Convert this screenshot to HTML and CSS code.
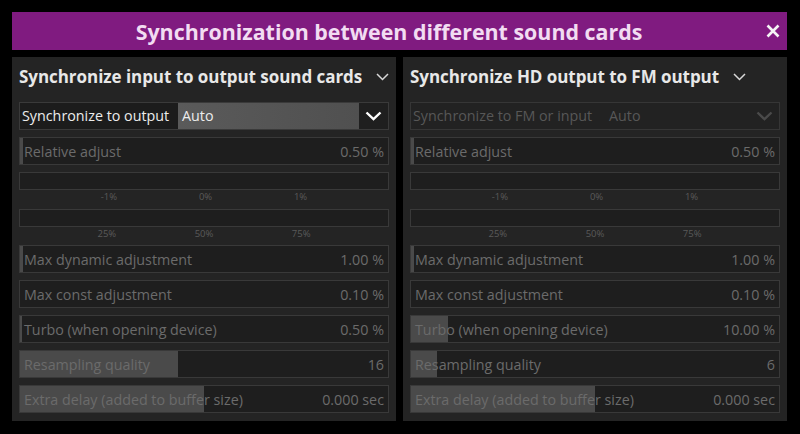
FILE: index.html
```html
<!DOCTYPE html>
<html>
<head>
<meta charset="utf-8">
<link rel="stylesheet" href="styles.css">
</head>
<body>
<div class="window">
  <div class="titlebar">
    <div class="title">Synchronization between different sound cards</div>
    <div class="close">
      <svg width="14" height="14" viewBox="0 0 14 14"><path d="M1.5 1.5 L12.5 12.5 M12.5 1.5 L1.5 12.5" stroke="#f4f4f4" stroke-width="2.6" fill="none"/></svg>
    </div>
  </div>
  <div class="panels">
    <section class="panel">
      <div class="phead">
        <span class="ptitle">Synchronize input to output sound cards</span>
        <svg class="pchev" width="13" height="8" viewBox="0 0 13 8"><path d="M1 1 L6.5 6.5 L12 1" stroke="#d8d8d8" stroke-width="1.5" fill="none"/></svg>
      </div>
      <div class="combo">
        <div class="clabel">Synchronize to output</div>
        <div class="cvalue">Auto</div>
        <div class="cbtn"><svg width="17" height="10" viewBox="0 0 17 10"><path d="M1.5 1.5 L8.5 8.2 L15.5 1.5" stroke="#ffffff" stroke-width="2.4" fill="none"/></svg></div>
      </div>
      <div class="row"><div class="fill" style="width:3px"></div><span class="lbl">Relative adjust</span><span class="val">0.50 %</span></div>
      <div class="scale"><div class="sbar"></div><div class="ticks"><span>-1%</span><span>0%</span><span>1%</span></div></div>
      <div class="scale"><div class="sbar"></div><div class="ticks"><span>25%</span><span>50%</span><span>75%</span></div></div>
      <div class="row"><div class="fill" style="width:3px"></div><span class="lbl">Max dynamic adjustment</span><span class="val">1.00 %</span></div>
      <div class="row"><span class="lbl">Max const adjustment</span><span class="val">0.10 %</span></div>
      <div class="row"><div class="fill" style="width:2px"></div><span class="lbl">Turbo (when opening device)</span><span class="val">0.50 %</span></div>
      <div class="row"><div class="fill" style="width:158px"></div><span class="lbl">Resampling quality</span><span class="val">16</span></div>
      <div class="row last"><div class="fill" style="width:184px"></div><span class="lbl">Extra delay (added to buffer size)</span><span class="val">0.000 sec</span></div>
    </section>
    <section class="panel">
      <div class="phead">
        <span class="ptitle">Synchronize HD output to FM output</span>
        <svg class="pchev" width="13" height="8" viewBox="0 0 13 8"><path d="M1 1 L6.5 6.5 L12 1" stroke="#d8d8d8" stroke-width="1.5" fill="none"/></svg>
      </div>
      <div class="combo disabled">
        <div class="clabel">Synchronize to FM or input</div>
        <div class="cvalue">Auto</div>
        <div class="cbtn"><svg width="17" height="10" viewBox="0 0 17 10"><path d="M1.5 1.5 L8.5 8.2 L15.5 1.5" stroke="#4a4a4a" stroke-width="2.4" fill="none"/></svg></div>
      </div>
      <div class="row"><div class="fill" style="width:3px"></div><span class="lbl">Relative adjust</span><span class="val">0.50 %</span></div>
      <div class="scale"><div class="sbar"></div><div class="ticks"><span>-1%</span><span>0%</span><span>1%</span></div></div>
      <div class="scale"><div class="sbar"></div><div class="ticks"><span>25%</span><span>50%</span><span>75%</span></div></div>
      <div class="row"><div class="fill" style="width:3px"></div><span class="lbl">Max dynamic adjustment</span><span class="val">1.00 %</span></div>
      <div class="row"><span class="lbl">Max const adjustment</span><span class="val">0.10 %</span></div>
      <div class="row"><div class="fill" style="width:37px"></div><span class="lbl">Turbo (when opening device)</span><span class="val">10.00 %</span></div>
      <div class="row"><div class="fill" style="width:26px"></div><span class="lbl">Resampling quality</span><span class="val">6</span></div>
      <div class="row last"><div class="fill" style="width:184px"></div><span class="lbl">Extra delay (added to buffer size)</span><span class="val">0.000 sec</span></div>
    </section>
  </div>
</div>
</body>
</html>
```
FILE: styles.css
```css
html, body {
  margin: 0;
  padding: 0;
  background: #000;
}
body {
  font-family: "Open Sans", "Noto Sans", sans-serif;
  width: 800px;
  height: 434px;
  overflow: hidden;
}
.window {
  padding: 12px 13px 0 12px;
}
.titlebar {
  height: 38px;
  background: #801b80;
  display: flex;
  align-items: center;
}
.title {
  flex: 1;
  text-align: center;
  color: #f2dcf2;
  font-weight: 700;
  font-size: 21.4px;
}
.close {
  width: 14px;
  padding-right: 7px;
  display: flex;
  align-items: center;
}
.close svg { display: block; }
.panels {
  margin-top: 7px;
  display: grid;
  grid-template-columns: 384px 384px;
  column-gap: 7px;
}
.panel {
  background: #242424;
  height: 364px;
  padding: 0 7px;
  box-sizing: border-box;
}
.phead {
  height: 38px;
  margin-bottom: 7px;
  display: flex;
  align-items: center;
  gap: 14px;
  padding-top: 1px;
  box-sizing: border-box;
}
.ptitle {
  color: #e8e8e8;
  font-weight: 700;
  font-size: 17px;
  letter-spacing: -0.05px;
  white-space: nowrap;
}
.pchev { display: block; flex: none; }
.combo {
  height: 28px;
  box-sizing: border-box;
  border: 1px solid #3a3a3a;
  background: #1c1c1c;
  display: flex;
  margin-bottom: 7px;
  font-size: 14.3px;
  color: #ececec;
}
.clabel {
  width: 156px;
  padding-left: 2px;
  line-height: 26px;
  white-space: nowrap;
}
.cvalue {
  flex: 1;
  background: linear-gradient(90deg, #5a5a5a, #505050);
  padding-left: 4px;
  line-height: 26px;
}
.cbtn {
  width: 29px;
  display: flex;
  align-items: center;
  justify-content: center;
  background: #1f1f1f;
}
.cbtn svg { display: block; }
.combo.disabled { color: #575757; background: #222; border-color: #363636; }
.combo.disabled .clabel { width: 192px; }
.combo.disabled .cvalue { background: transparent; }
.combo.disabled .cbtn { background: transparent; }
.row {
  position: relative;
  height: 28px;
  box-sizing: border-box;
  border: 1px solid #393939;
  background: #1e1e1e;
  margin-bottom: 7px;
  display: flex;
  justify-content: space-between;
  align-items: center;
  padding: 0 4px 0 4px;
  font-size: 14.3px;
  color: #6b6b6b;
  white-space: nowrap;
}
.row.last { margin-bottom: 0; }
.row .fill {
  position: absolute;
  left: 0;
  top: 0;
  bottom: 0;
  background: #4a4a4a;
}
.row .lbl, .row .val { position: relative; }
.scale {
  height: 36.5px;
}
.sbar {
  height: 18px;
  box-sizing: border-box;
  border: 1px solid #393939;
  background: #1e1e1e;
}
.ticks {
  display: flex;
  justify-content: space-evenly;
  font-size: 9.5px;
  color: #5a5a5a;
  line-height: 10px;
  padding-top: 2px;
}
```
